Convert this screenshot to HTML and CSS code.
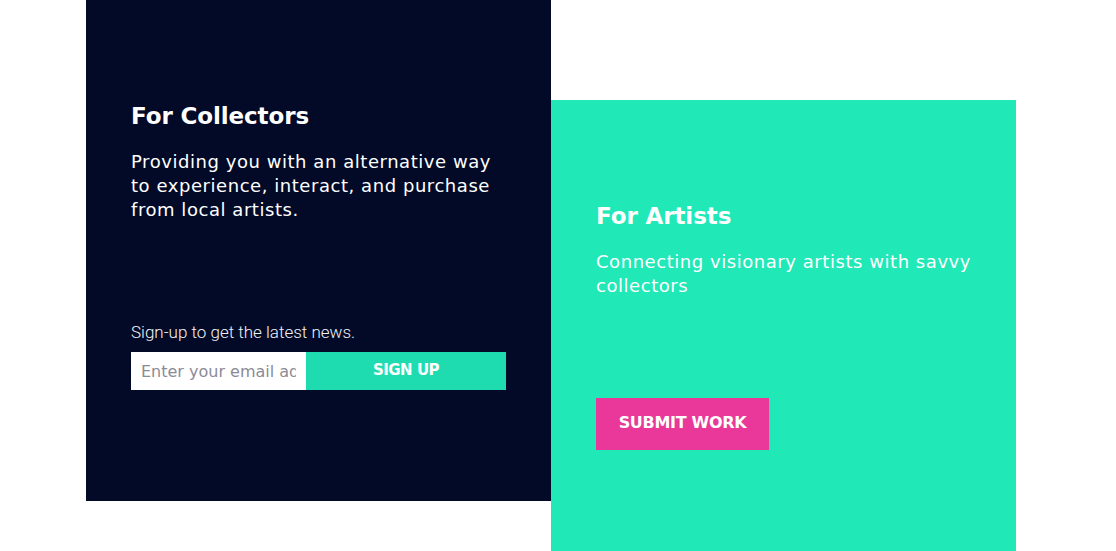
FILE: index.html
```html
<!DOCTYPE html>
<html>
<head>
<meta charset="utf-8">
<link rel="stylesheet" href="styles.css">
</head>
<body>
<div class="page">
  <section class="card card-dark">
    <h2 class="title">For Collectors</h2>
    <p class="lead">Providing you with an alternative way to experience, interact, and purchase from local artists.</p>
    <p class="signup-label">Sign-up to get the latest news.</p>
    <form class="signup">
      <input class="email" type="text" placeholder="Enter your email address">
      <button class="signup-btn" type="button">SIGN UP</button>
    </form>
  </section>
  <section class="card card-green">
    <h2 class="title">For Artists</h2>
    <p class="lead">Connecting visionary artists with savvy collectors</p>
    <button class="submit-btn" type="button">SUBMIT WORK</button>
  </section>
</div>
</body>
</html>
```
FILE: styles.css
```css
html, body {
  margin: 0;
  padding: 0;
  background: #ffffff;
  overflow: hidden;
}
.page {
  display: flex;
  align-items: flex-start;
  padding-left: 86px;
  font-family: "DejaVu Sans", "Noto Sans", sans-serif;
}
.card {
  width: 465px;
  box-sizing: border-box;
  padding: 100px 45px 0;
  color: #ffffff;
}
.card-dark {
  background: #020a27;
  height: 501px;
}
.card-green {
  background: #20e8b7;
  height: 460px;
  margin-top: 100px;
}
.title {
  margin: 0;
  font-size: 23px;
  line-height: 32px;
  font-weight: 700;
  letter-spacing: -0.1px;
}
.lead {
  margin: 18px 0 0;
  font-size: 18px;
  line-height: 24px;
  font-weight: 400;
  letter-spacing: 0.55px;
}
.card-dark .lead {
  width: 372px;
}
.signup-label {
  margin: 100px 0 0;
  font-family: Roboto, "Liberation Sans", sans-serif;
  font-size: 17px;
  line-height: 20px;
  font-weight: 300;
  color: #f2f2f5;
}
.signup {
  display: flex;
  margin-top: 10px;
}
.email {
  width: 175px;
  height: 38px;
  box-sizing: border-box;
  border: 0;
  margin: 0;
  padding: 0 10px;
  font-family: "DejaVu Sans", sans-serif;
  font-size: 16px;
  color: #333;
  background: #fff;
  outline: none;
}
.email::placeholder {
  color: #8b8b96;
}
.signup-btn {
  width: 200px;
  height: 38px;
  border: 0;
  margin: 0;
  padding: 0 0 3px;
  background: #1fdcb0;
  color: #fff;
  font-family: "DejaVu Sans", sans-serif;
  font-weight: 700;
  font-size: 15px;
  letter-spacing: -0.5px;
}
.submit-btn {
  display: block;
  margin-top: 100px;
  width: 173px;
  height: 52px;
  border: 0;
  padding: 0 0 3px;
  background: #e9389a;
  color: #fff;
  font-family: "DejaVu Sans", sans-serif;
  font-weight: 700;
  font-size: 16px;
  letter-spacing: -0.3px;
}
```
